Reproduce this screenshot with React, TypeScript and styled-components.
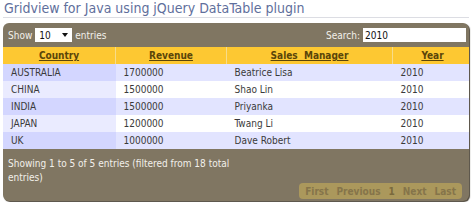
import styled, { createGlobalStyle } from 'styled-components';

const GlobalStyle = createGlobalStyle`
    body {
        margin: 0;
        background: #fff;
        font-family: "DejaVu Sans Condensed", "DejaVu Sans", sans-serif;
    }
`;

const Page = styled.div`
    width: 474px;
    height: 202px;
    overflow: hidden;
`;

const Title = styled.h2`
    margin: 0 5px 0 3px;
    padding: 1px 0 1px 1px;
    font-size: 14px;
    font-weight: normal;
    line-height: 15px;
    color: #5f6f9c;
    border-bottom: 1px solid #dcdde3;
`;

const Panel = styled.div`
    margin: 5px 5px 0 3px;
    background: #807662;
    border-radius: 6px;
    overflow: hidden;
    box-shadow: 1px 1px 1px #4d463a;
`;

const Toolbar = styled.div`
    height: 24px;
    display: flex;
    align-items: center;
    justify-content: space-between;
    padding: 0 3px 0 5px;
    color: #f2f0ea;
    font-size: 10px;
`;

const Label = styled.label`
    display: flex;
    align-items: center;
    gap: 3px;
`;

const Select = styled.div`
    width: 37px;
    height: 14px;
    box-sizing: border-box;
    background: #fff;
    color: #111;
    display: flex;
    align-items: center;
    justify-content: space-between;
    padding: 0 4px 0 4px;
    font-size: 10px;
`;

const Caret = styled.span`
    width: 0;
    height: 0;
    border-left: 3px solid transparent;
    border-right: 3px solid transparent;
    border-top: 4px solid #111;
`;

const SearchInput = styled.div`
    width: 103px;
    height: 14px;
    box-sizing: border-box;
    background: #fff;
    color: #111;
    font-size: 10px;
    display: flex;
    align-items: center;
    padding-left: 2px;
`;

const Table = styled.table`
    width: 100%;
    border-collapse: collapse;
    font-size: 10px;
    table-layout: fixed;
`;

const Th = styled.th<{ $w: number }>`
    width: ${p => p.$w}px;
    height: 17px;
    padding: 0;
    background: #fdc832;
    color: #5a4509;
    font-weight: bold;
    text-decoration: underline;
    text-align: center;
    border-left: 1px solid #f7dc8a;
    &:first-child {
        border-left: none;
    }
`;

const Tr = styled.tr<{ $odd: boolean }>`
    background: ${p => (p.$odd ? '#e2e4ff' : '#ffffff')};
    & > td:first-child {
        background: ${p => (p.$odd ? '#d3d6ff' : '#eaebff')};
    }
`;

const Td = styled.td`
    height: 17px;
    padding: 0 0 0 8px;
    color: #3a3a3a;
    white-space: nowrap;
`;

const Footer = styled.div`
    display: flex;
    justify-content: space-between;
    align-items: flex-end;
    height: 52px;
    padding: 0 7px 2px 5px;
    box-sizing: border-box;
`;

const Info = styled.div`
    align-self: flex-start;
    width: 228px;
    padding-top: 8px;
    color: #f2f0ea;
    font-size: 10px;
    line-height: 14px;
`;

const Pager = styled.div`
    display: flex;
    align-items: center;
    height: 16px;
    padding: 0 2px;
    background: #ab985c;
    border-radius: 4px;
`;

const PageButton = styled.span<{ $current?: boolean }>`
    padding: 0 4px;
    font-size: 10px;
    font-weight: bold;
    color: ${p => (p.$current ? '#7a6a3c' : '#85744a')};
`;

const rows = [
    ['AUSTRALIA', '1700000', 'Beatrice Lisa', '2010'],
    ['CHINA', '1500000', 'Shao Lin', '2010'],
    ['INDIA', '1500000', 'Priyanka', '2010'],
    ['JAPAN', '1200000', 'Twang Li', '2010'],
    ['UK', '1000000', 'Dave Robert', '2010'],
];

export default function App() {
    return (
        <Page>
            <GlobalStyle />
            <Title>Gridview for Java using jQuery DataTable plugin</Title>
            <Panel>
                <Toolbar>
                    <Label>
                        Show
                        <Select>
                            10 <Caret />
                        </Select>
                        entries
                    </Label>
                    <Label>
                        Search:
                        <SearchInput>2010</SearchInput>
                    </Label>
                </Toolbar>
                <Table>
                    <thead>
                        <tr>
                            <Th $w={112}>Country</Th>
                            <Th $w={110}>Revenue</Th>
                            <Th $w={165}>Sales&nbsp;&nbsp;Manager</Th>
                            <Th $w={79}>Year</Th>
                        </tr>
                    </thead>
                    <tbody>
                        {rows.map((r, i) => (
                            <Tr key={r[0]} $odd={i % 2 === 0}>
                                {r.map(c => (
                                    <Td key={c}>{c}</Td>
                                ))}
                            </Tr>
                        ))}
                    </tbody>
                </Table>
                <Footer>
                    <Info>Showing 1 to 5 of 5 entries (filtered from 18 total entries)</Info>
                    <Pager>
                        <PageButton>First</PageButton>
                        <PageButton>Previous</PageButton>
                        <PageButton $current>1</PageButton>
                        <PageButton>Next</PageButton>
                        <PageButton>Last</PageButton>
                    </Pager>
                </Footer>
            </Panel>
        </Page>
    );
}
